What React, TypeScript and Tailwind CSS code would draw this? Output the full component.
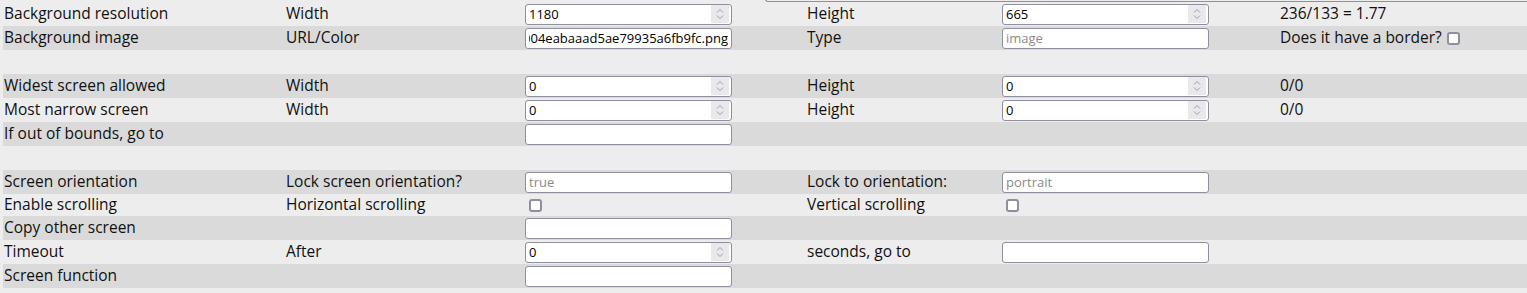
import React from "react";

const COLS = "grid grid-cols-[282px_239px_282px_195px_278px_1fr] items-center";

function Spinner() {
  return (
    <div className="flex h-[18px] w-[18px] shrink-0 items-center justify-center bg-[#e9e9ed]">
      <svg width="18" height="18" viewBox="0 0 18 18" fill="none" stroke="#9b9ba6" strokeWidth="1">
        <path d="M6 7.5 L9 4.5 L12 7.5" />
        <path d="M6 10.5 L9 13.5 L12 10.5" />
      </svg>
    </div>
  );
}

function NumInput({ value }: { value: string }) {
  return (
    <div className="flex h-[21px] w-[207px] items-center rounded-[3px] border border-[#8f8f9d] bg-white pl-[3px] pr-[2px]">
      <input
        type="text"
        defaultValue={value}
        className="min-w-0 flex-1 bg-transparent text-[13px] text-black outline-none"
      />
      <Spinner />
    </div>
  );
}

function TextInput({ value, placeholder, rtl }: { value?: string; placeholder?: string; rtl?: boolean }) {
  return (
    <input
      type="text"
      dir={rtl ? "rtl" : undefined}
      defaultValue={value}
      placeholder={placeholder}
      className="h-[21px] w-[207px] rounded-[3px] border border-[#8f8f9d] bg-white px-[3px] text-[13px] text-black outline-none placeholder:text-[#8a8a8a]"
    />
  );
}

function Check() {
  return (
    <input
      type="checkbox"
      className="m-0 h-[13px] w-[13px] appearance-none rounded-[3px] border-2 border-[#8f8f9d] bg-white align-middle"
    />
  );
}

function Cell({ children }: { children?: React.ReactNode }) {
  return <div className="flex items-center whitespace-nowrap pl-px">{children}</div>;
}

export default function App() {
  return (
    <div className="relative min-h-screen bg-[#ededed] pt-[2px] font-['Open_Sans',sans-serif] text-[15.5px] leading-none text-[#111]">
      <div className="pointer-events-none absolute left-[765px] right-0 top-[-10px] h-[12px] rounded-bl-[3px] border-b border-l border-[#8f8f9d]" />
      <div className="ml-[3px]">
        <div className={`${COLS} h-[24px]`}>
          <Cell>Background resolution</Cell>
          <Cell>Width</Cell>
          <Cell><NumInput value="1180" /></Cell>
          <Cell>Height</Cell>
          <Cell><NumInput value="665" /></Cell>
          <Cell>236/133 = 1.77</Cell>
        </div>
        <div className={`${COLS} h-[24px] bg-[#dadada]`}>
          <Cell>Background image</Cell>
          <Cell>URL/Color</Cell>
          <Cell><TextInput rtl value="media/screens/bg/5c1f7a2d8e3b6004eabaaad5ae79935a6fb9fc.png" /></Cell>
          <Cell>Type</Cell>
          <Cell><TextInput placeholder="image" /></Cell>
          <Cell>
            <span>Does it have a border?</span>
            <span className="ml-[5px] flex"><Check /></span>
          </Cell>
        </div>
        <div className="h-[24px]" />
        <div className={`${COLS} h-[24px] bg-[#dadada]`}>
          <Cell>Widest screen allowed</Cell>
          <Cell>Width</Cell>
          <Cell><NumInput value="0" /></Cell>
          <Cell>Height</Cell>
          <Cell><NumInput value="0" /></Cell>
          <Cell>0/0</Cell>
        </div>
        <div className={`${COLS} h-[24px]`}>
          <Cell>Most narrow screen</Cell>
          <Cell>Width</Cell>
          <Cell><NumInput value="0" /></Cell>
          <Cell>Height</Cell>
          <Cell><NumInput value="0" /></Cell>
          <Cell>0/0</Cell>
        </div>
        <div className={`${COLS} h-[24px] bg-[#dadada]`}>
          <Cell>If out of bounds, go to</Cell>
          <Cell />
          <Cell><TextInput /></Cell>
          <Cell />
          <Cell />
          <Cell />
        </div>
        <div className="h-[24px]" />
        <div className={`${COLS} h-[24px] bg-[#dadada]`}>
          <Cell>Screen orientation</Cell>
          <Cell>Lock screen orientation?</Cell>
          <Cell><TextInput placeholder="true" /></Cell>
          <Cell>Lock to orientation:</Cell>
          <Cell><TextInput placeholder="portrait" /></Cell>
          <Cell />
        </div>
        <div className={`${COLS} h-[22px]`}>
          <Cell>Enable scrolling</Cell>
          <Cell>Horizontal scrolling</Cell>
          <Cell><span className="ml-[4px] flex"><Check /></span></Cell>
          <Cell>Vertical scrolling</Cell>
          <Cell><span className="ml-[4px] flex"><Check /></span></Cell>
          <Cell />
        </div>
        <div className={`${COLS} h-[24px] bg-[#dadada]`}>
          <Cell>Copy other screen</Cell>
          <Cell />
          <Cell><TextInput /></Cell>
          <Cell />
          <Cell />
          <Cell />
        </div>
        <div className={`${COLS} h-[24px]`}>
          <Cell>Timeout</Cell>
          <Cell>After</Cell>
          <Cell><NumInput value="0" /></Cell>
          <Cell>seconds, go to</Cell>
          <Cell><TextInput /></Cell>
          <Cell />
        </div>
        <div className={`${COLS} h-[24px] bg-[#dadada]`}>
          <Cell>Screen function</Cell>
          <Cell />
          <Cell><TextInput /></Cell>
          <Cell />
          <Cell />
          <Cell />
        </div>
      </div>
    </div>
  );
}
